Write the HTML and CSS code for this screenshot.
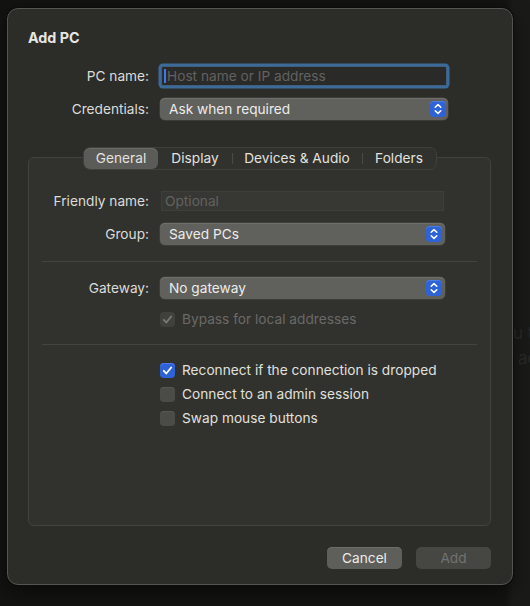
FILE: index.html
```html
<!DOCTYPE html>
<html>
<head>
<meta charset="utf-8">
<link rel="stylesheet" href="styles.css">
</head>
<body>
<div class="behind"><div>u t</div><div class="l2">ac</div></div>
<div class="dialog">
  <div class="title">Add PC</div>
  <div class="row r1">
    <label class="lbl">PC name:</label>
    <div class="textfield focus"><span class="caret"></span><span class="ph">Host name or IP address</span></div>
  </div>
  <div class="row r2">
    <label class="lbl">Credentials:</label>
    <div class="popup wide"><span>Ask when required</span>
      <span class="stepper"><svg width="16" height="16" viewBox="0 0 16 16"><path d="M5.2 6.3 8 3.6l2.8 2.7M5.2 9.7 8 12.4l2.8-2.7" fill="none" stroke="#fff" stroke-width="1.5" stroke-linecap="round" stroke-linejoin="round"/></svg></span>
    </div>
  </div>

  <div class="tabs">
    <div class="seg">
      <div class="tab sel t1">General</div>
      <div class="tab t2">Display</div>
      <div class="tab t3 sep">Devices &amp; Audio</div>
      <div class="tab t4 sep">Folders</div>
    </div>
    <div class="box">
      <div class="row b1">
        <label class="lbl">Friendly name:</label>
        <div class="textfield plain"><span class="ph">Optional</span></div>
      </div>
      <div class="row b2">
        <label class="lbl">Group:</label>
        <div class="popup"><span>Saved PCs</span>
          <span class="stepper"><svg width="16" height="16" viewBox="0 0 16 16"><path d="M5.2 6.3 8 3.6l2.8 2.7M5.2 9.7 8 12.4l2.8-2.7" fill="none" stroke="#fff" stroke-width="1.5" stroke-linecap="round" stroke-linejoin="round"/></svg></span>
        </div>
      </div>
      <div class="hr h1"></div>
      <div class="row b3">
        <label class="lbl">Gateway:</label>
        <div class="popup"><span>No gateway</span>
          <span class="stepper"><svg width="16" height="16" viewBox="0 0 16 16"><path d="M5.2 6.3 8 3.6l2.8 2.7M5.2 9.7 8 12.4l2.8-2.7" fill="none" stroke="#fff" stroke-width="1.5" stroke-linecap="round" stroke-linejoin="round"/></svg></span>
        </div>
      </div>
      <div class="check disabled c0">
        <span class="cb on"><svg width="15" height="15" viewBox="0 0 15 15"><path d="M3.8 7.8l2.5 2.7 4.9-6" fill="none" stroke="#7a7a77" stroke-width="1.8" stroke-linecap="round" stroke-linejoin="round"/></svg></span>
        <span class="ctext">Bypass for local addresses</span>
      </div>
      <div class="hr h2"></div>
      <div class="check c1">
        <span class="cb on blue"><svg width="15" height="15" viewBox="0 0 15 15"><path d="M3.8 7.8l2.5 2.7 4.9-6" fill="none" stroke="#fff" stroke-width="1.8" stroke-linecap="round" stroke-linejoin="round"/></svg></span>
        <span class="ctext">Reconnect if the connection is dropped</span>
      </div>
      <div class="check c2">
        <span class="cb"></span>
        <span class="ctext">Connect to an admin session</span>
      </div>
      <div class="check c2">
        <span class="cb"></span>
        <span class="ctext">Swap mouse buttons</span>
      </div>
    </div>
  </div>

  <div class="buttons">
    <div class="btn cancel">Cancel</div>
    <div class="btn add">Add</div>
  </div>
</div>
</body>
</html>
```

FILE: styles.css
```css
* { box-sizing: border-box; }
html, body { margin: 0; padding: 0; }
body {
  width: 530px;
  height: 606px;
  overflow: hidden;
  background: linear-gradient(90deg, #131312 0, #131312 505px, #1a1a19 513px, #1a1a19 100%);
  font-family: Inter, "Noto Sans", sans-serif;
  font-size: 13.7px;
  color: #dcdcd9;
  position: relative;
  padding-top: 8px;
  padding-left: 7px;
}
.behind {
  position: absolute;
  left: 513px;
  top: 321px;
  font-size: 17px;
  line-height: 25px;
  color: #2a2a29;
  white-space: nowrap;
}
.behind .l2 { padding-left: 5px; }
.dialog {
  position: relative;
  width: 506px;
  height: 577px;
  background: #2c2c29;
  border: 1px solid #555552;
  border-radius: 11px;
  padding: 0 21px 0 20px;
  box-shadow: 0 0 0 1px #0c0c0c, 0 6px 20px rgba(0,0,0,0.5);
  display: flex;
  flex-direction: column;
}
.title {
  margin-top: 21px;
  height: 16px;
  line-height: 16px;
  font-weight: 700;
  font-size: 14.3px;
  color: #e6e6e3;
}
.row {
  display: flex;
  align-items: center;
}
.lbl {
  width: 121px;
  text-align: right;
  flex: none;
  margin-right: 11px;
  color: #dcdcd9;
}
.r1 { margin-top: 20px; height: 20px; }
.r2 { margin-top: 12px; height: 22px; }
.textfield {
  height: 20px;
  display: flex;
  align-items: center;
  padding-left: 3px;
  position: relative;
}
.textfield.focus {
  width: 286px;
  margin-left: 1px;
  background: #2a2a28;
  border: 1px solid #3e5f80;
  box-shadow: 0 0 0 2.5px #3c6a99;
  border-radius: 2px;
}
.caret {
  width: 2px;
  height: 14px;
  background: #3b7ae8;
  margin-right: 1px;
  margin-left: -1px;
}
.ph { color: #626260; }
.textfield.plain {
  width: 283px;
  margin-left: 1px;
  background: #373734;
  border: 1px solid #3e3e3b;
}
.popup {
  width: 285px;
  height: 22px;
  background: #60605d;
  border-radius: 5px;
  box-shadow: inset 0 1px 0 #6e6e6b, 0 0 0 0.5px #4a4a47;
  display: flex;
  align-items: center;
  justify-content: space-between;
  padding: 0 3px 0 9px;
  color: #ececea;
}
.popup.wide { width: 288px; padding-right: 2px; }
.stepper {
  width: 16px;
  height: 16px;
  background: #2e63d7;
  border-radius: 4px;
  display: flex;
  box-shadow: inset 0 1px 0 #4a7be6;
}
.stepper svg { display: block; }
.tabs {
  margin-top: 27px;
  display: flex;
  flex-direction: column;
}
.seg {
  align-self: center;
  margin-left: 1px;
  position: relative;
  z-index: 1;
  height: 23px;
  display: flex;
  background: #31312e;
  border: 1px solid #3f3f3c;
  border-radius: 7px;
}
.tab {
  height: 21px;
  line-height: 21px;
  text-align: center;
  color: #e2e2df;
  position: relative;
}
.tab.sel {
  background: #5b5b58;
  border-radius: 6px;
  box-shadow: inset 0 1px 0 #6a6a67;
}
.tab.sep::before {
  content: "";
  position: absolute;
  left: 0;
  top: 5px;
  height: 11px;
  width: 1px;
  background: #4a4a47;
}
.t1 { width: 74px; }
.t2 { width: 74px; }
.t3 { width: 130px; }
.t4 { width: 74px; }
.box {
  margin-top: -13px;
  height: 369px;
  background: #31312e;
  border: 1px solid #42423f;
  border-radius: 6px;
  padding-top: 33px;
  display: flex;
  flex-direction: column;
}
.box .lbl { width: 120px; }
.b1 { height: 20px; }
.b2 { margin-top: 12px; height: 22px; }
.b3 { margin-top: 15px; height: 22px; }
.hr {
  height: 1px;
  background: #434340;
  margin: 0 13px;
}
.h1 { margin-top: 16px; }
.h2 { margin-top: 17px; }
.check {
  display: flex;
  align-items: center;
  height: 16px;
  padding-left: 131px;
}
.c0 { margin-top: 12px; }
.c1 { margin-top: 17px; }
.c2 { margin-top: 8px; }
.cb {
  width: 15px;
  height: 15px;
  border-radius: 4px;
  background: #4b4b48;
  box-shadow: inset 0 1px 0 #565653;
  margin-right: 7px;
  flex: none;
}
.cb svg { display: block; }
.cb.blue { background: #2e63d7; box-shadow: inset 0 1px 0 #4a7be6; }
.disabled .cb { background: #40403d; box-shadow: none; }
.ctext { color: #e0e0dd; }
.disabled .ctext { color: #6a6a67; }
.buttons {
  margin-top: 21px;
  display: flex;
  justify-content: flex-end;
  gap: 14px;
}
.btn {
  width: 75px;
  height: 22px;
  line-height: 22px;
  text-align: center;
  border-radius: 5px;
}
.cancel {
  background: #5e5e5b;
  color: #ececea;
  box-shadow: inset 0 1px 0 #6c6c69;
}
.add {
  background: #464643;
  color: #737370;
}
```
